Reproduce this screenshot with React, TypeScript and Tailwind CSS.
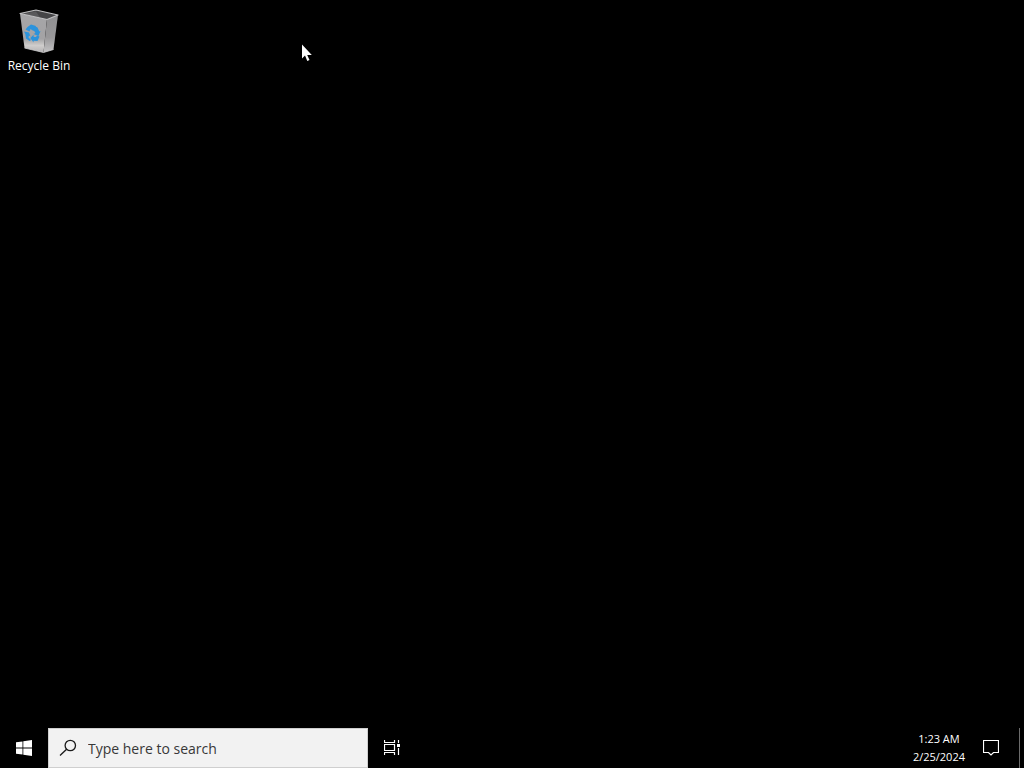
import { useState } from 'react';

const CLOCK = {
    time: '1:23 AM',
    date: '2/25/2024',
};

const RecycleBinIcon = () => (
    <svg width="48" height="48" viewBox="0 0 48 48" aria-hidden="true">
        <defs>
            <linearGradient id="binFront" x1="0" y1="0" x2="0" y2="1">
                <stop offset="0" stopColor="#a6a6a8" />
                <stop offset="0.65" stopColor="#a4a3a5" />
                <stop offset="0.82" stopColor="#cfcdcc" />
                <stop offset="1" stopColor="#b4b2b3" />
            </linearGradient>
            <linearGradient id="binSide" x1="0" y1="0" x2="0" y2="1">
                <stop offset="0" stopColor="#8f8f91" />
                <stop offset="0.6" stopColor="#99989a" />
                <stop offset="1" stopColor="#c4c3c4" />
            </linearGradient>
        </defs>
        <path d="M5 7.500 32 13 28.500 46.500 9.500 42Z" fill="url(#binFront)" />
        <path d="M32 13 43 9 38.500 43.500 28.500 46.500Z" fill="url(#binSide)" />
        <path d="M5 7.500 21 4 43 9 32 13.500Z" fill="#454547" />
        <path d="M8 8 21 5.500 25 11.500Z" fill="#59595b" />
        <path d="M5 7.500 21 4 43 9 32 13.500Z" fill="none" stroke="#c0c0c2" strokeWidth="1.200" strokeLinejoin="round" />
        <path d="M9.500 42 28.500 46.500 38.500 43.500" fill="none" stroke="#cfcfd1" strokeWidth="0.800" />
        <g fill="#2b93dc">
            <path d="M12.500 21 16 18.500 21 20 18.500 25 15.500 23 14.500 25.500 10.500 23.500Z" />
            <path d="M19.500 20 22.500 21.500 24.300 25.500 25.500 25 23.500 30 18.500 28 20.500 27 18.500 24Z" />
            <path d="M24.500 30.500 22.500 35 18.500 34.800 18.500 36.500 15.300 32 18.500 28.700 18.700 31 21 31 22 29.500Z" />
            <path d="M9 25.500 14 26.500 15.500 30.500 14 29.500 13.500 31.500 16 34 14.500 35 11 32.500 10.300 28Z" />
        </g>
    </svg>
);

const StartIcon = () => (
    <svg width="16" height="16" viewBox="0 0 16 16" fill="#fff" aria-hidden="true">
        <path d="M0 2.300 6.500 1.400V7.500H0ZM7.300 1.300 16 0V7.500H7.300ZM0 8.400H6.500V14.600L0 13.700ZM7.300 8.400H16V16L7.300 14.700Z" />
    </svg>
);

const SearchIcon = () => (
    <svg width="18" height="18" viewBox="0 0 18 18" fill="none" stroke="#1a1a1a" strokeWidth="1.300" aria-hidden="true">
        <circle cx="11.300" cy="6.500" r="5.200" />
        <path d="M7.600 10.200 1 16.500" />
    </svg>
);

const TaskViewIcon = () => (
    <svg width="16" height="16" viewBox="0 0 16 16" aria-hidden="true">
        <path
            d="M0.500 0V2.500H10.500V0M0.500 4.500H10.500V10.500H0.500ZM0.500 15V12.500H10.500V15M14.500 0V3M14.500 8V15"
            fill="none"
            stroke="#fff"
            strokeWidth="1.200"
        />
        <path d="M13 4H16V7H13Z" fill="#fff" />
    </svg>
);

const NotificationIcon = () => (
    <svg width="16" height="16" viewBox="0 0 16 16" fill="none" stroke="#fff" aria-hidden="true">
        <path d="M0.500 0.500H15.500V12.500H10.500L8 15 5.500 12.500H0.500Z" strokeWidth="1.200" />
    </svg>
);

const Cursor = () => (
    <svg
        className="pointer-events-none absolute left-[301px] top-[44px]"
        width="12"
        height="19"
        viewBox="0 0 12 19"
        aria-hidden="true"
    >
        <path d="M1 0.500V14.500L4 11.500 6.300 17 8.500 16 6.200 11H10.800Z" fill="#fff" />
    </svg>
);

const Taskbar = () => {
    const [query, setQuery] = useState('');

    return (
        <footer className="flex h-10 items-stretch bg-black">
            <button aria-label="Start" className="flex w-12 items-center justify-center hover:bg-white/10">
                <StartIcon />
            </button>

            <label className="flex w-80 items-center gap-2 border border-[#cfcfcf] bg-[#f2f2f2] pl-2.5">
                <SearchIcon />
                <input
                    type="text"
                    aria-label="Search"
                    value={query}
                    onChange={(e) => setQuery(e.target.value)}
                    placeholder="Type here to search"
                    className="min-w-0 flex-1 bg-transparent pl-[3px] text-[14px] text-[#333] outline-none placeholder:text-[#383838]"
                />
            </label>

            <button aria-label="Task View" className="flex w-12 items-center justify-center hover:bg-white/10">
                <TaskViewIcon />
            </button>

            {/* System tray */}
            <div className="ml-auto flex items-stretch">
                <button className="flex flex-col items-center justify-center px-0.5 text-[11px] leading-[18px] hover:bg-white/10">
                    <time>{CLOCK.time}</time>
                    <time>{CLOCK.date}</time>
                </button>
                <button aria-label="Notifications" className="flex w-12 items-center justify-center hover:bg-white/10">
                    <NotificationIcon />
                </button>
                <button aria-label="Show desktop" className="ml-1 w-[5px] border-l border-[#6b6b6b] hover:bg-white/10" />
            </div>
        </footer>
    );
};

export default function App() {
    return (
        <div className="relative flex h-screen flex-col overflow-hidden bg-black font-['Open_Sans','Noto_Sans',sans-serif] text-white">
            <main className="flex-1 p-px">
                <button className="flex w-[76px] flex-col items-center pt-[5px] text-[12px] leading-4 hover:bg-white/10">
                    <RecycleBinIcon />
                    <span className="pt-1">Recycle Bin</span>
                </button>
            </main>
            <Taskbar />
            <Cursor />
        </div>
    );
}
